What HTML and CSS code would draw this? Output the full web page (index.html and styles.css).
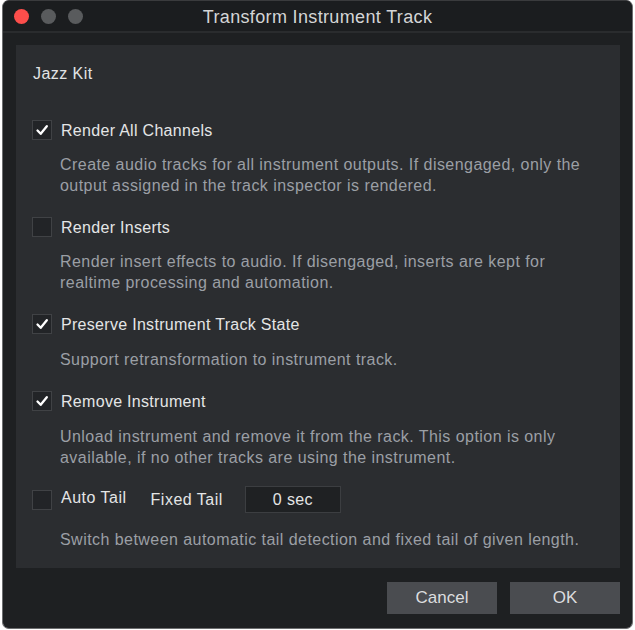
FILE: index.html
```html
<!DOCTYPE html>
<html>
<head>
<meta charset="utf-8">
<link rel="stylesheet" href="styles.css">
</head>
<body>
<div class="window">
  <div class="titlebar">
    <div class="lights">
      <span class="light red"></span>
      <span class="light grey"></span>
      <span class="light grey"></span>
    </div>
    <div class="title">Transform Instrument Track</div>
  </div>
  <div class="content">
    <div class="panel">
      <div class="heading">Jazz Kit</div>

      <div class="option">
        <div class="row"><span class="check on"><svg viewBox="0 0 20 20" width="20" height="20"><path d="M5.5 10.5 L8.7 13.8 L14.8 6.2" fill="none" stroke="#ffffff" stroke-width="2.3" stroke-linecap="round" stroke-linejoin="round"/></svg></span><span class="label">Render All Channels</span></div>
        <p class="desc">Create audio tracks for all instrument outputs. If disengaged, only the<br>output assigned in the track inspector is rendered.</p>
      </div>

      <div class="option">
        <div class="row"><span class="check"></span><span class="label">Render Inserts</span></div>
        <p class="desc">Render insert effects to audio. If disengaged, inserts are kept for<br>realtime processing and automation.</p>
      </div>

      <div class="option wide-desc">
        <div class="row"><span class="check on"><svg viewBox="0 0 20 20" width="20" height="20"><path d="M5.5 10.5 L8.7 13.8 L14.8 6.2" fill="none" stroke="#ffffff" stroke-width="2.3" stroke-linecap="round" stroke-linejoin="round"/></svg></span><span class="label">Preserve Instrument Track State</span></div>
        <p class="desc">Support retransformation to instrument track.</p>
      </div>

      <div class="option wide-desc before-tail">
        <div class="row"><span class="check on"><svg viewBox="0 0 20 20" width="20" height="20"><path d="M5.5 10.5 L8.7 13.8 L14.8 6.2" fill="none" stroke="#ffffff" stroke-width="2.3" stroke-linecap="round" stroke-linejoin="round"/></svg></span><span class="label">Remove Instrument</span></div>
        <p class="desc">Unload instrument and remove it from the rack. This option is only<br>available, if no other tracks are using the instrument.</p>
      </div>

      <div class="option last">
        <div class="row tail"><span class="check"></span><span class="label auto">Auto Tail</span><span class="label fixed">Fixed Tail</span><span class="field">0 sec</span></div>
        <p class="desc">Switch between automatic tail detection and fixed tail of given length.</p>
      </div>
    </div>
    <div class="buttons">
      <button class="btn">Cancel</button>
      <button class="btn">OK</button>
    </div>
  </div>
</div>
</body>
</html>
```

FILE: styles.css
```css
html, body {
  margin: 0;
  padding: 0;
  background: #ffffff;
}
body {
  font-family: "Liberation Sans", Arial, Helvetica, sans-serif;
  width: 635px;
  height: 630px;
  overflow: hidden;
}
.window {
  margin: 0 2px 0 2px;
  width: 629px;
  height: 627px;
  background: #1e2022;
  border: 1px solid #6d6e70;
  border-top-color: #3a3b3d;
  border-radius: 7px;
  overflow: hidden;
  display: flex;
  flex-direction: column;
}
.titlebar {
  height: 30px;
  flex: none;
  background: #1b1d1f;
  border-bottom: 2px solid #2a2c2e;
  display: flex;
  align-items: center;
  position: relative;
}
.lights {
  display: flex;
  gap: 12px;
  padding-left: 11px;
  padding-top: 1px;
}
.light {
  width: 15px;
  height: 15px;
  border-radius: 50%;
  display: block;
}
.light.red { background: #fc4e4b; }
.light.grey { background: #595b5d; }
.title {
  position: absolute;
  left: 0;
  right: 0;
  top: 0;
  height: 30px;
  line-height: 32px;
  text-align: center;
  color: #d4d5d6;
  font-size: 18px;
  letter-spacing: 0.35px;
  pointer-events: none;
}
.content {
  flex: 1;
  display: flex;
  flex-direction: column;
  padding: 12px 12px 12px 13px;
}
.panel {
  background: #2b2d30;
  height: 523px;
  box-sizing: border-box;
  padding: 18px 16px 0 16px;
  display: flex;
  flex-direction: column;
}
.heading {
  color: #e2e3e4;
  font-size: 16px;
  letter-spacing: 0.45px;
  line-height: 21px;
  margin-bottom: 36px;
  padding-left: 1px;
}
.option {
  margin-bottom: 21px;
}
.row {
  display: flex;
  align-items: center;
  height: 20px;
}
.check {
  width: 18px;
  height: 18px;
  border: 1px solid #404245;
  background: #222427;
  flex: none;
  position: relative;
  margin-right: 9px;
}
.check svg {
  position: absolute;
  left: -1px;
  top: -1px;
}
.label {
  color: #e4e5e6;
  font-size: 16px;
  letter-spacing: 0.3px;
  line-height: 21px;
}
.desc {
  margin: 14px 0 0 28px;
  color: #9b9fa5;
  font-size: 16px;
  letter-spacing: 0.45px;
  line-height: 21px;
}
.row.tail {
  height: 27px;
}
.label.auto {
  margin-top: -4px;
  letter-spacing: 0.5px;
}
.label.fixed {
  margin-left: 24px;
  letter-spacing: 0.5px;
}
.field {
  margin-left: 22px;
  width: 94px;
  height: 25px;
  border: 1px solid #3c3e41;
  background: #1f2123;
  color: #e4e5e6;
  font-size: 16px;
  letter-spacing: 0.4px;
  line-height: 26px;
  text-align: center;
}
.option.wide-desc .desc {
  margin-top: 15px;
}
.option.before-tail {
  margin-bottom: 18px;
}
.option.last .desc {
  margin-top: 16px;
}
.buttons {
  display: flex;
  justify-content: flex-end;
  gap: 13px;
  margin-top: 14px;
}
.btn {
  width: 110px;
  height: 32px;
  background: #4a4c50;
  border: none;
  color: #dcdddf;
  font-family: "Liberation Sans", Arial, Helvetica, sans-serif;
  font-size: 17px;
  padding: 0;
}
```
